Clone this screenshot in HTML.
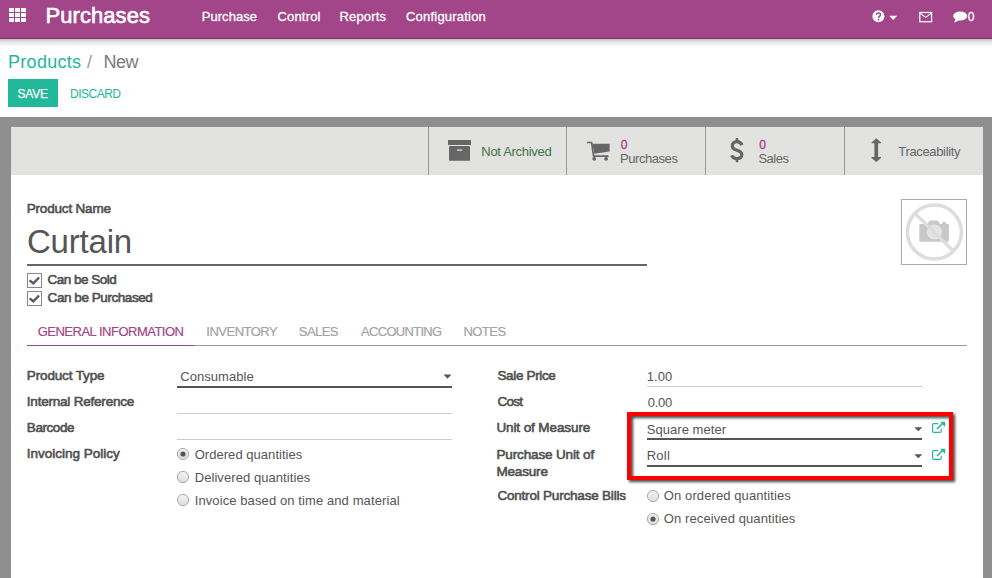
<!DOCTYPE html>
<html><head><meta charset="utf-8">
<style>
html,body{margin:0;padding:0;}
body{width:992px;height:578px;overflow:hidden;position:relative;background:#fff;font-family:"Liberation Sans",sans-serif;}
.a{position:absolute;}
.t{position:absolute;white-space:pre;font-family:"Liberation Sans",sans-serif;}
</style></head><body>
<!-- navbar -->
<div class="a" style="left:0;top:0;width:992px;height:38px;background:#a24689;"></div>
<div class="a" style="left:0;top:38px;width:992px;height:1px;background:#7f3069;"></div>
<div class="a" style="left:0;top:39px;width:992px;height:8px;background:linear-gradient(rgba(0,0,0,0.24),rgba(0,0,0,0.08) 45%,rgba(0,0,0,0));"></div>
<svg class="a" style="left:9px;top:8px" width="18" height="15" viewBox="0 0 18 15">
 <g fill="#fff">
  <rect x="0" y="0" width="5" height="4" rx="0.35"/><rect x="6" y="0" width="5" height="4" rx="0.35"/><rect x="12" y="0" width="5" height="4" rx="0.35"/>
  <rect x="0" y="5" width="5" height="4" rx="0.35"/><rect x="6" y="5" width="5" height="4" rx="0.35"/><rect x="12" y="5" width="5" height="4" rx="0.35"/>
  <rect x="0" y="10" width="5" height="4" rx="0.35"/><rect x="6" y="10" width="5" height="4" rx="0.35"/><rect x="12" y="10" width="5" height="4" rx="0.35"/>
 </g>
</svg>
<!-- help icon -->
<svg class="a" style="left:872px;top:10px" width="26" height="14" viewBox="0 0 26 14">
 <circle cx="6.4" cy="6.3" r="6" fill="#fff"/>
 <path d="M4.5 4.9 Q4.6 3 6.5 3 Q8.5 3 8.5 4.8 Q8.5 5.9 7.4 6.5 Q6.5 7 6.5 8.1" fill="none" stroke="#a24689" stroke-width="1.5"/>
 <rect x="5.75" y="8.8" width="1.6" height="1.6" fill="#a24689"/>
 <path d="M17.2 5.8 L25.2 5.8 L21.2 9.9 Z" fill="#fff"/>
</svg>
<!-- envelope -->
<svg class="a" style="left:918px;top:11px" width="15" height="12" viewBox="0 0 15 12">
 <rect x="1.8" y="1.5" width="11.8" height="9.2" fill="none" stroke="#fff" stroke-width="1.25"/>
 <path d="M2 2.1 L7.7 6.4 L13.4 2.1" fill="none" stroke="#fff" stroke-width="1.15"/>
</svg>
<!-- chat -->
<svg class="a" style="left:953px;top:11px" width="15" height="13" viewBox="0 0 15 13">
 <ellipse cx="7.2" cy="5" rx="7" ry="4.6" fill="#fff"/>
 <path d="M2.5 7.5 L1.2 11.8 L6.5 9 Z" fill="#fff"/>
</svg>
<!-- buttons -->
<div class="a" style="left:8px;top:79px;width:50px;height:28px;background:#21b799;"></div>
<!-- gray bg -->
<div class="a" style="left:0;top:117px;width:992px;height:461px;background:#8f8f8f;"></div>
<div class="a" style="left:11px;top:127px;width:972px;height:451px;background:#fff;"></div>
<div class="a" style="left:11px;top:127px;width:972px;height:48px;background:#e2e2e0;"></div>
<div class="a" style="left:428px;top:127px;width:1px;height:48px;background:#999;"></div>
<div class="a" style="left:566px;top:127px;width:1px;height:48px;background:#999;"></div>
<div class="a" style="left:705px;top:127px;width:1px;height:48px;background:#999;"></div>
<div class="a" style="left:844px;top:127px;width:1px;height:48px;background:#999;"></div>
<!-- archive icon -->
<svg class="a" style="left:448px;top:139px" width="24" height="23" viewBox="0 0 24 23">
 <rect x="0" y="1" width="23" height="5" fill="#666666"/>
 <rect x="1" y="7" width="21" height="14.8" rx="0.8" fill="#666666"/>
 <rect x="9" y="10.4" width="5.4" height="1.3" rx="0.5" fill="#e2e2e0"/>
</svg>
<!-- cart icon -->
<svg class="a" style="left:587px;top:141px" width="24" height="21" viewBox="0 0 24 21">
 <path d="M0.3 1.5 L4.6 1.5 L6.6 15.2 L20.8 15.2" fill="none" stroke="#666666" stroke-width="1.7" stroke-linecap="round"/>
 <path d="M5.2 2.8 L22.6 2.8 L22.6 10.6 L7.4 12.8 Z" fill="#666666"/>
 <circle cx="7.2" cy="17.8" r="1.9" fill="#666666"/>
 <circle cx="19.1" cy="17.8" r="1.9" fill="#666666"/>
</svg>
<!-- dollar -->
<svg class="a" style="left:725px;top:134px" width="25" height="32" viewBox="0 0 25 32">
 <path d="M17 11.2 C16 8.7 14.2 7.6 12 7.6 C9.2 7.6 7.3 9.3 7.3 11.9 C7.3 14.6 9.6 15.5 12 16.3 C14.8 17.2 16.8 18.4 16.8 20.8 C16.8 23.2 14.8 24.7 12 24.7 C9.4 24.7 7.6 23.5 6.6 21.4" fill="none" stroke="#666666" stroke-width="3.3"/>
 <line x1="12" y1="4" x2="12" y2="8.5" stroke="#666666" stroke-width="2.5"/>
 <line x1="12" y1="23.5" x2="12" y2="28.2" stroke="#666666" stroke-width="2.5"/>
</svg>
<!-- arrows -->
<svg class="a" style="left:871px;top:138px" width="11" height="25" viewBox="0 0 11 25">
 <path d="M5.25 0.2 L10 4.5 L10 5.3 L7.1 5.3 L7.1 19.1 L10 19.1 L10 19.9 L5.25 24.1 L0.5 19.9 L0.5 19.1 L3.4 19.1 L3.4 5.3 L0.5 5.3 L0.5 4.5 Z" fill="#666666"/>
</svg>
<!-- photo placeholder -->
<div class="a" style="left:901px;top:199px;width:64px;height:64px;border:1px solid #aaa;"></div>
<svg class="a" style="left:902px;top:200px" width="64" height="64" viewBox="0 0 64 64">
 <rect x="17.3" y="24" width="29.6" height="17.7" rx="1.5" fill="#c8c8c8"/>
 <path d="M24.5 25 L27 21.5 Q27.8 20.4 29 20.4 L34.5 20.4 Q35.7 20.4 36.5 21.5 L39 25 Z" fill="#c8c8c8"/>
 <rect x="40.2" y="21.9" width="4" height="3" rx="0.8" fill="#c8c8c8"/>
 <circle cx="32.4" cy="32" r="7.6" fill="#e4e4e4"/>
 <circle cx="32.4" cy="32" r="27" fill="none" stroke="#dddddd" stroke-width="3.6"/>
 <line x1="13.7" y1="14.1" x2="50.3" y2="50" stroke="#dddddd" stroke-width="3.4"/>
</svg>
<!-- name underline -->
<div class="a" style="left:27px;top:264px;width:620px;height:2px;background:#666;"></div>
<!-- checkboxes -->
<svg class="a" style="left:27px;top:273px" width="16" height="34" viewBox="0 0 16 34">
 <rect x="0.5" y="0.5" width="14" height="14" fill="#fff" stroke="#888" stroke-width="1"/>
 <path d="M2.6 7.4 L6.3 10.3 L12.1 4.5" fill="none" stroke="#5a5a5a" stroke-width="2.4"/>
 <rect x="0.5" y="18.5" width="14" height="14" fill="#fff" stroke="#888" stroke-width="1"/>
 <path d="M2.6 25.4 L6.3 28.3 L12.1 22.5" fill="none" stroke="#5a5a5a" stroke-width="2.4"/>
</svg>
<!-- tabs line -->
<div class="a" style="left:27px;top:345px;width:940px;height:1px;background:#999;"></div>
<div class="a" style="left:27px;top:345px;width:167px;height:1px;background:#a24689;"></div>
<!-- left fields -->
<div class="a" style="left:177px;top:386px;width:275px;height:2px;background:#555;"></div>
<svg class="a" style="left:443px;top:374px" width="10" height="6" viewBox="0 0 10 6"><path d="M0.5 0.5 L8.5 0.5 L4.5 4.8 Z" fill="#555"/></svg>
<div class="a" style="left:177px;top:413px;width:275px;height:1px;background:#ccc;"></div>
<div class="a" style="left:177px;top:439px;width:275px;height:1px;background:#ccc;"></div>
<!-- radios left -->
<svg class="a" style="left:176px;top:447px" width="14" height="60" viewBox="0 0 14 60">
 <defs><linearGradient id="rg" x1="0" y1="0" x2="0" y2="1"><stop offset="0" stop-color="#f4f4f4"/><stop offset="1" stop-color="#dcdcdc"/></linearGradient></defs>
 <circle cx="7" cy="7" r="5.6" fill="url(#rg)" stroke="#aaa" stroke-width="1"/>
 <circle cx="7" cy="7" r="2.6" fill="#555"/>
 <circle cx="7" cy="30" r="5.6" fill="url(#rg)" stroke="#aaa" stroke-width="1"/>
 <circle cx="7" cy="53" r="5.6" fill="url(#rg)" stroke="#aaa" stroke-width="1"/>
</svg>
<!-- right fields -->
<div class="a" style="left:647px;top:386px;width:275px;height:1px;background:#ccc;"></div>
<div class="a" style="left:647px;top:438px;width:275px;height:2px;background:#555;"></div>
<div class="a" style="left:647px;top:465px;width:275px;height:2px;background:#555;"></div>
<svg class="a" style="left:914px;top:427px" width="10" height="6" viewBox="0 0 10 6"><path d="M0.3 0.3 L8.3 0.3 L4.3 4.3 Z" fill="#555"/></svg>
<svg class="a" style="left:914px;top:454px" width="10" height="6" viewBox="0 0 10 6"><path d="M0.3 0.3 L8.3 0.3 L4.3 4.3 Z" fill="#555"/></svg>
<svg class="a" style="left:931px;top:421px" width="16" height="14" viewBox="0 0 16 14">
 <path d="M7 2.6 L2.8 2.6 Q1.6 2.6 1.6 3.8 L1.6 10.2 Q1.6 11.4 2.8 11.4 L9 11.4 Q10.2 11.4 10.2 10.2 L10.2 7.8" fill="none" stroke="#21b799" stroke-width="1.15"/>
 <path d="M6 8 L12 2" fill="none" stroke="#21b799" stroke-width="1.6"/>
 <path d="M9 0.8 L14.2 0.8 L14.2 6 Z" fill="#21b799"/>
</svg>
<svg class="a" style="left:931px;top:448px" width="16" height="14" viewBox="0 0 16 14">
 <path d="M7 2.6 L2.8 2.6 Q1.6 2.6 1.6 3.8 L1.6 10.2 Q1.6 11.4 2.8 11.4 L9 11.4 Q10.2 11.4 10.2 10.2 L10.2 7.8" fill="none" stroke="#21b799" stroke-width="1.15"/>
 <path d="M6 8 L12 2" fill="none" stroke="#21b799" stroke-width="1.6"/>
 <path d="M9 0.8 L14.2 0.8 L14.2 6 Z" fill="#21b799"/>
</svg>
<svg class="a" style="left:646px;top:489px" width="14" height="37" viewBox="0 0 14 37">
 <circle cx="7" cy="7" r="5.6" fill="url(#rg)" stroke="#aaa" stroke-width="1"/>
 <circle cx="7" cy="30" r="5.6" fill="url(#rg)" stroke="#aaa" stroke-width="1"/>
 <circle cx="7" cy="30" r="2.6" fill="#555"/>
</svg>
<div class="t" style="left:45.6px;top:5.2px;font-size:22px;line-height:22px;font-weight:normal;color:#ffffff;letter-spacing:0.05px;-webkit-text-stroke:0.6px #fff;">Purchases</div>
<div class="t" style="left:201.8px;top:10.0px;font-size:13px;line-height:13px;font-weight:normal;color:#ffffff;letter-spacing:0.03px;-webkit-text-stroke:0.3px #fff;">Purchase</div>
<div class="t" style="left:277.5px;top:10.0px;font-size:13px;line-height:13px;font-weight:normal;color:#ffffff;letter-spacing:0.17px;-webkit-text-stroke:0.3px #fff;">Control</div>
<div class="t" style="left:339.5px;top:10.0px;font-size:13px;line-height:13px;font-weight:normal;color:#ffffff;letter-spacing:0.17px;-webkit-text-stroke:0.3px #fff;">Reports</div>
<div class="t" style="left:406.0px;top:10.0px;font-size:13px;line-height:13px;font-weight:normal;color:#ffffff;letter-spacing:0.21px;-webkit-text-stroke:0.3px #fff;">Configuration</div>
<div class="t" style="left:967.7px;top:10.8px;font-size:12px;line-height:12px;font-weight:normal;color:#ffffff;letter-spacing:0.00px;-webkit-text-stroke:0.3px #fff;">0</div>
<div class="t" style="left:8.0px;top:52.5px;font-size:18px;line-height:18px;font-weight:normal;color:#21b799;letter-spacing:0.29px;">Products</div>
<div class="t" style="left:87.0px;top:53.0px;font-size:18px;line-height:18px;font-weight:normal;color:#999999;letter-spacing:0.00px;">/</div>
<div class="t" style="left:103.5px;top:52.5px;font-size:18px;line-height:18px;font-weight:normal;color:#7a7a7a;letter-spacing:-0.50px;">New</div>
<div class="t" style="left:17.5px;top:87.8px;font-size:12px;line-height:12px;font-weight:normal;color:#ffffff;letter-spacing:-0.17px;-webkit-text-stroke:0.25px #fff;">SAVE</div>
<div class="t" style="left:70.0px;top:87.8px;font-size:12px;line-height:12px;font-weight:normal;color:#21b799;letter-spacing:-0.50px;">DISCARD</div>
<div class="t" style="left:481.3px;top:145.0px;font-size:13px;line-height:13px;font-weight:normal;color:#3c763d;letter-spacing:-0.30px;">Not Archived</div>
<div class="t" style="left:620.8px;top:138.8px;font-size:12px;line-height:12px;font-weight:normal;color:#a24689;letter-spacing:0.00px;-webkit-text-stroke:0.35px #a24689;">0</div>
<div class="t" style="left:620.0px;top:151.7px;font-size:13px;line-height:13px;font-weight:normal;color:#666666;letter-spacing:-0.44px;">Purchases</div>
<div class="t" style="left:759.3px;top:138.8px;font-size:12px;line-height:12px;font-weight:normal;color:#a24689;letter-spacing:0.00px;-webkit-text-stroke:0.35px #a24689;">0</div>
<div class="t" style="left:758.4px;top:151.7px;font-size:13px;line-height:13px;font-weight:normal;color:#666666;letter-spacing:-0.47px;">Sales</div>
<div class="t" style="left:898.3px;top:144.8px;font-size:13px;line-height:13px;font-weight:normal;color:#666666;letter-spacing:-0.34px;">Traceability</div>
<div class="t" style="left:26.7px;top:201.6px;font-size:13.5px;line-height:13.5px;font-weight:normal;color:#505050;letter-spacing:-0.18px;-webkit-text-stroke:0.6px #505050;">Product Name</div>
<div class="t" style="left:26.9px;top:224.9px;font-size:33px;line-height:33px;font-weight:normal;color:#555555;letter-spacing:-0.18px;">Curtain</div>
<div class="t" style="left:47.6px;top:272.9px;font-size:13.5px;line-height:13.5px;font-weight:normal;color:#505050;letter-spacing:-0.52px;-webkit-text-stroke:0.6px #505050;">Can be Sold</div>
<div class="t" style="left:47.6px;top:291.1px;font-size:13.5px;line-height:13.5px;font-weight:normal;color:#505050;letter-spacing:-0.44px;-webkit-text-stroke:0.6px #505050;">Can be Purchased</div>
<div class="t" style="left:37.7px;top:324.8px;font-size:13px;line-height:13px;font-weight:normal;color:#a24689;letter-spacing:-0.50px;-webkit-text-stroke:0.2px #a24689;">GENERAL INFORMATION</div>
<div class="t" style="left:206.3px;top:324.8px;font-size:13px;line-height:13px;font-weight:normal;color:#a3a3a3;letter-spacing:-0.50px;-webkit-text-stroke:0.2px #a3a3a3;">INVENTORY</div>
<div class="t" style="left:298.8px;top:324.8px;font-size:13px;line-height:13px;font-weight:normal;color:#a3a3a3;letter-spacing:-0.58px;-webkit-text-stroke:0.2px #a3a3a3;">SALES</div>
<div class="t" style="left:361.0px;top:324.8px;font-size:13px;line-height:13px;font-weight:normal;color:#a3a3a3;letter-spacing:-0.69px;-webkit-text-stroke:0.2px #a3a3a3;">ACCOUNTING</div>
<div class="t" style="left:463.4px;top:324.8px;font-size:13px;line-height:13px;font-weight:normal;color:#a3a3a3;letter-spacing:-0.52px;-webkit-text-stroke:0.2px #a3a3a3;">NOTES</div>
<div class="t" style="left:26.8px;top:368.6px;font-size:13.5px;line-height:13.5px;font-weight:normal;color:#505050;letter-spacing:-0.14px;-webkit-text-stroke:0.6px #505050;">Product Type</div>
<div class="t" style="left:26.8px;top:395.2px;font-size:13.5px;line-height:13.5px;font-weight:normal;color:#505050;letter-spacing:-0.21px;-webkit-text-stroke:0.6px #505050;">Internal Reference</div>
<div class="t" style="left:26.8px;top:421.3px;font-size:13.5px;line-height:13.5px;font-weight:normal;color:#505050;letter-spacing:-0.42px;-webkit-text-stroke:0.6px #505050;">Barcode</div>
<div class="t" style="left:26.8px;top:447.3px;font-size:13.5px;line-height:13.5px;font-weight:normal;color:#505050;letter-spacing:0.00px;-webkit-text-stroke:0.6px #505050;">Invoicing Policy</div>
<div class="t" style="left:180.2px;top:370.0px;font-size:13px;line-height:13px;font-weight:normal;color:#555555;letter-spacing:0.07px;">Consumable</div>
<div class="t" style="left:194.7px;top:448.0px;font-size:13px;line-height:13px;font-weight:normal;color:#555555;letter-spacing:0.04px;">Ordered quantities</div>
<div class="t" style="left:194.7px;top:471.0px;font-size:13px;line-height:13px;font-weight:normal;color:#555555;letter-spacing:0.07px;">Delivered quantities</div>
<div class="t" style="left:194.7px;top:494.0px;font-size:13px;line-height:13px;font-weight:normal;color:#555555;letter-spacing:0.10px;">Invoice based on time and material</div>
<div class="t" style="left:497.4px;top:368.6px;font-size:13.5px;line-height:13.5px;font-weight:normal;color:#505050;letter-spacing:-0.34px;-webkit-text-stroke:0.6px #505050;">Sale Price</div>
<div class="t" style="left:497.4px;top:394.6px;font-size:13.5px;line-height:13.5px;font-weight:normal;color:#505050;letter-spacing:-0.73px;-webkit-text-stroke:0.6px #505050;">Cost</div>
<div class="t" style="left:496.4px;top:420.6px;font-size:13.5px;line-height:13.5px;font-weight:normal;color:#505050;letter-spacing:-0.10px;-webkit-text-stroke:0.6px #505050;">Unit of Measure</div>
<div class="t" style="left:496.4px;top:447.6px;font-size:13.5px;line-height:13.5px;font-weight:normal;color:#505050;letter-spacing:-0.13px;-webkit-text-stroke:0.6px #505050;">Purchase Unit of</div>
<div class="t" style="left:496.4px;top:465.4px;font-size:13.5px;line-height:13.5px;font-weight:normal;color:#505050;letter-spacing:-0.17px;-webkit-text-stroke:0.6px #505050;">Measure</div>
<div class="t" style="left:497.4px;top:488.9px;font-size:13.5px;line-height:13.5px;font-weight:normal;color:#505050;letter-spacing:-0.20px;-webkit-text-stroke:0.6px #505050;">Control Purchase Bills</div>
<div class="t" style="left:646.7px;top:370.0px;font-size:13px;line-height:13px;font-weight:normal;color:#555555;letter-spacing:0.10px;">1.00</div>
<div class="t" style="left:647.7px;top:396.0px;font-size:13px;line-height:13px;font-weight:normal;color:#555555;letter-spacing:-0.23px;">0.00</div>
<div class="t" style="left:646.7px;top:422.5px;font-size:13px;line-height:13px;font-weight:normal;color:#555555;letter-spacing:0.05px;">Square meter</div>
<div class="t" style="left:646.7px;top:449.0px;font-size:13px;line-height:13px;font-weight:normal;color:#555555;letter-spacing:0.23px;">Roll</div>
<div class="t" style="left:663.8px;top:489.0px;font-size:13px;line-height:13px;font-weight:normal;color:#555555;letter-spacing:0.10px;">On ordered quantities</div>
<div class="t" style="left:663.8px;top:511.6px;font-size:13px;line-height:13px;font-weight:normal;color:#555555;letter-spacing:0.10px;">On received quantities</div>
<!-- red box -->
<div class="a" style="left:627px;top:412px;width:318px;height:60px;border:4px solid #f00;filter:drop-shadow(2px 2px 1.5px rgba(0,0,0,0.75));"></div>
</body></html>
